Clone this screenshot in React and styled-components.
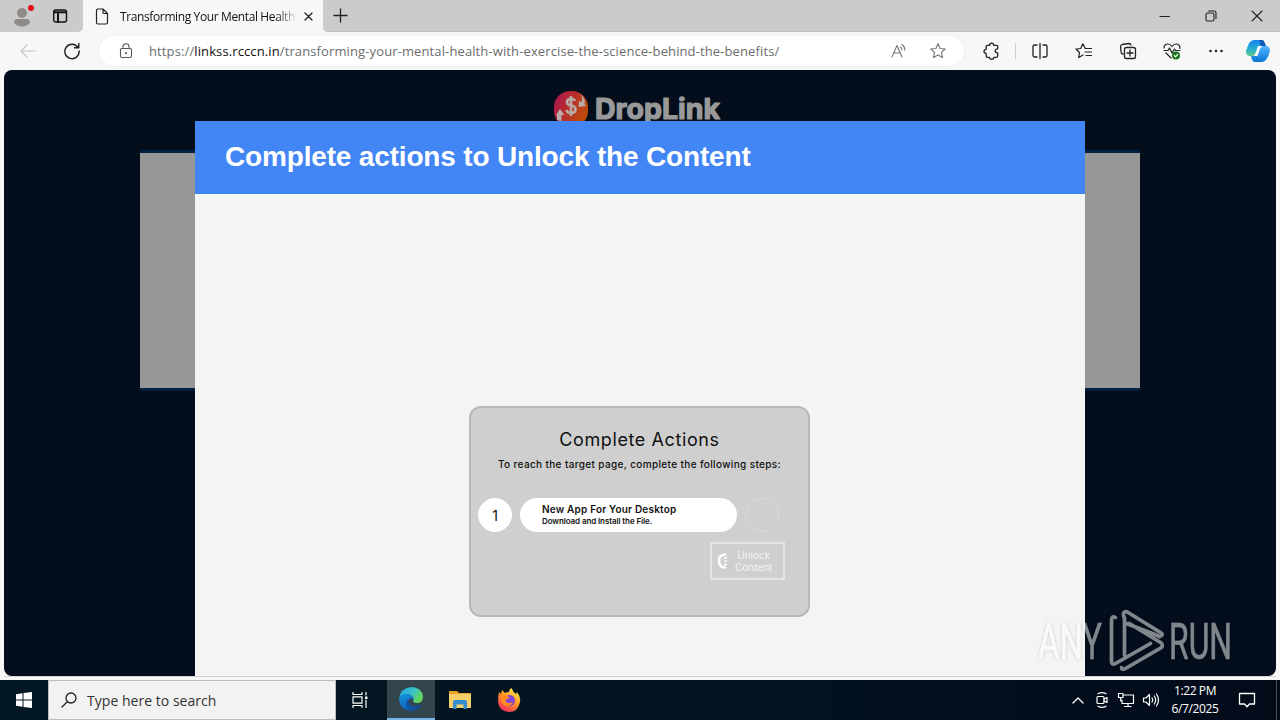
import React from "react";
import styled, { createGlobalStyle } from "styled-components";

const Global = createGlobalStyle`
  * { box-sizing: border-box; }
  html, body { margin: 0; padding: 0; overflow: hidden; }
  body { font-family: "Open Sans", "Noto Sans", sans-serif; }
  svg { display: block; flex: none; }
`;

const Screen = styled.div`
  position: relative;
  width: 1280px;
  height: 720px;
  display: flex;
  flex-direction: column;
  overflow: hidden;
  background: #f7f7f7;
`;

/* ---------- Browser chrome ---------- */
const TabStrip = styled.div`
  height: 32px;
  flex: none;
  display: flex;
  background: #f7f7f7;
`;
const StripStart = styled.div`
  width: 83px;
  display: flex;
  align-items: center;
  padding-left: 11px;
  gap: 18px;
  background: #cbcbcb;
  border-bottom-right-radius: 5px;
`;
const Tab = styled.div`
  width: 240px;
  display: flex;
  align-items: center;
  padding: 0 11px 0 12px;
  background: #f7f7f7;
`;
const TabTitle = styled.div`
  width: 175px;
  margin: 0 9px 0 11px;
  white-space: nowrap;
  font-size: 12px;
  letter-spacing: ${(p) => p.$spacing};
  color: #111;
  mask-image: linear-gradient(90deg, #000 156px, transparent 178px);
`;
const StripEnd = styled.div`
  flex: 1;
  display: flex;
  align-items: center;
  justify-content: space-between;
  padding: 0 17px 0 10px;
  background: #cbcbcb;
  border-bottom-left-radius: 5px;
  border-bottom: 1px solid #bdbdbd;
`;
const WindowControls = styled.div`
  display: flex;
  gap: 34px;
`;
const Toolbar = styled.div`
  height: 38px;
  flex: none;
  display: flex;
  align-items: center;
  padding: 0 9px 0 19px;
`;
const NavButtons = styled.div`
  width: 80px;
  display: flex;
  gap: 26px;
`;
const AddressBar = styled.div`
  width: 865px;
  height: 30px;
  border-radius: 15px;
  background: #fff;
  box-shadow: 0 0 2px #e6e6e6;
  display: flex;
  align-items: center;
  padding: 0 17px 0 18px;
`;
const Url = styled.div`
  flex: 1;
  margin-left: 14px;
  font-size: 13px;
  white-space: nowrap;
  letter-spacing: ${(p) => p.$spacing};
  color: #6d6d6d;
  b { font-weight: 400; color: #111; }
`;
const UrlActions = styled.div`
  display: flex;
  gap: 21px;
`;
const ToolIcons = styled.div`
  flex: 1;
  display: flex;
  align-items: center;
  gap: 26px;
  padding-left: 17px;
`;
const Divider = styled.div`
  width: 1px;
  height: 16px;
  margin: 0 -11px 0 -12px;
  background: #d0d0d0;
`;
const CopilotLogo = styled.svg`
  margin-left: -6px;
`;

/* ---------- Web page ---------- */
const Page = styled.main`
  position: relative;
  height: 606px;
  flex: none;
  margin: 0 4px;
  border-radius: 8px;
  background: #030d1b;
  overflow: hidden;
  display: flex;
  flex-direction: column;
  align-items: center;
  padding-top: 19px;
`;
const PageEdge = styled.div`
  height: 4px;
  flex: none;
  margin: 0 4px;
  border-top: 1px solid #d2d2d2;
`;
const SiteLogo = styled.svg`
  margin-right: 4px;
`;
const AdBlock = styled.div`
  width: 1000px;
  height: 241px;
  margin-top: 21px;
  background: #979797;
  border-top: 3px solid #02203f;
  border-bottom: 3px solid #02203f;
`;
const Modal = styled.section`
  position: absolute;
  left: 191px;
  top: 51px;
  width: 890px;
  height: 555px;
  background: #f4f4f4;
  display: flex;
  flex-direction: column;
  align-items: center;
`;
const ModalHeader = styled.h1`
  align-self: stretch;
  height: 73px;
  margin: 0 0 212px;
  padding: 0 30px 2px;
  display: flex;
  align-items: center;
  background: #4285f4;
  color: #fff;
  font: bold 28px "Liberation Sans", Arial, sans-serif;
  letter-spacing: ${(p) => p.$spacing};
`;
const Locker = styled.div`
  width: 341px;
  height: 211px;
  margin-right: 1px;
  border: 2px solid #b8b8b8;
  border-radius: 12px;
  background: #cfcfcf;
  font-family: Inter, sans-serif;
  color: #111;
  display: flex;
  flex-direction: column;
`;
const LockerTitle = styled.h2`
  margin: 20px 0 0;
  text-align: center;
  font-size: 18px;
  font-weight: 400;
  line-height: 24px;
  letter-spacing: ${(p) => p.$spacing};
`;
const LockerHint = styled.p`
  margin: 5px 0 0;
  text-align: center;
  white-space: nowrap;
  font-size: 10px;
  font-weight: 500;
  line-height: 14px;
  letter-spacing: ${(p) => p.$spacing};
`;
const StepRow = styled.div`
  display: flex;
  gap: 8px;
  margin: 27px 0 0 7px;
`;
const StepNumber = styled.div`
  width: 34px;
  height: 34px;
  border-radius: 50%;
  display: flex;
  align-items: center;
  justify-content: center;
  background: ${(p) => (p.$empty ? "transparent" : "#fff")};
  border: 1px solid ${(p) => (p.$empty ? "#d9d9d9" : "#fff")};
  font-size: 14px;
`;
const StepCard = styled.div`
  width: 217px;
  height: 34px;
  border-radius: 17px;
  background: #fff;
  padding: 5px 0 0 22px;
  white-space: nowrap;
`;
const StepName = styled.div`
  font-size: 10px;
  font-weight: 600;
  line-height: 13px;
  letter-spacing: ${(p) => p.$spacing};
`;
const StepText = styled.div`
  font-size: 8px;
  font-weight: 600;
  line-height: 11px;
  letter-spacing: ${(p) => p.$spacing};
`;
const UnlockButton = styled.div`
  align-self: flex-end;
  width: 75px;
  height: 38px;
  margin: 10px 23px 0 0;
  border: 2px solid #e4e4e4;
  display: flex;
  align-items: center;
  padding-left: 4px;
  gap: 6px;
  color: #f4f4f4;
  font-size: 10px;
  line-height: 12px;
  text-align: center;
`;

/* ---------- Taskbar ---------- */
const Taskbar = styled.footer`
  height: 40px;
  flex: none;
  display: flex;
  background: linear-gradient(90deg, #021721 0%, #02141f 55%, #030d1c 85%, #030b19 100%);
  color: #fff;
`;
const TaskButton = styled.div`
  width: ${(p) => p.$width || 49}px;
  display: flex;
  align-items: center;
  justify-content: center;
  padding-right: ${(p) => p.$shift || 0}px;
  background: ${(p) => (p.$active ? "#33464e" : "transparent")};
  border-bottom: ${(p) => (p.$active ? "2px solid #76b5e8" : "0")};
`;
const SearchBox = styled.div`
  width: 288px;
  display: flex;
  align-items: center;
  gap: 10px;
  padding-left: 12px;
  background: #f2f2f2;
  border: 1px solid #bcbcbc;
  color: #333;
  font-size: 14px;
  letter-spacing: ${(p) => p.$spacing};
`;
const Tray = styled.div`
  margin-left: auto;
  display: flex;
  align-items: center;
  gap: 7px;
  padding-right: 3px;
`;
const Clock = styled.div`
  width: 52px;
  margin: 0 10px 0 2px;
  text-align: center;
  font-size: 12px;
  line-height: 18px;
  white-space: nowrap;
  letter-spacing: ${(p) => p.$spacing};
`;
const Chevron = styled.div`
  margin-right: 2px;
`;
const DesktopEdge = styled.div`
  width: 1px;
  height: 40px;
  margin-left: 13px;
  background: #46505a;
`;
const Watermark = styled.svg`
  position: absolute;
  left: 1034px;
  top: 606px;
`;

function Icon({ w = 18, h = w, box, color = "#222", sw = 1.1, children }) {
  return (
    <svg width={w} height={h} viewBox={box || `0 0 ${w} ${h}`} fill="none" stroke={color} strokeWidth={sw} strokeLinecap="round" strokeLinejoin="round">
      {children}
    </svg>
  );
}

const STAR = "M9 1.8 11.1 6.5 16.2 7 12.4 10.4 13.5 15.5 9 12.9 4.5 15.5 5.6 10.4 1.8 7 6.9 6.5Z";

function Browser() {
  return (
    <>
      <TabStrip>
        <StripStart>
          <Icon w={23} h={26}>
            <g stroke="none">
              <circle cx="11" cy="10" r="5" fill="#8d8a88" />
              <path d="M3 19.5Q3 16 6.5 16H15.500Q19 16 19 19.500Q16 23.500 11 23.500T3 19.500Z" fill="#8d8a88" />
              <circle cx="20" cy="5" r="3" fill="#e00b1c" />
            </g>
          </Icon>
          <Icon w={16} sw={1.4} color="#111">
            <rect x="1.700" y="2" width="12.800" height="12" rx="2" />
            <path d="M2 4.300H14M6 5V14" strokeWidth="2" />
          </Icon>
        </StripStart>
        <Tab>
          <Icon w={14} h={17} sw={1.2}>
            <path d="M2.500 1H8L12.500 5.500V14.500Q12.500 16 11 16H3Q1.500 16 1.500 14.500V2.500Q1.500 1 3 1M8 1V4.500Q8 5.500 9 5.500H12.500" />
          </Icon>
          <TabTitle $spacing="-0.38px">Transforming Your Mental Health</TabTitle>
          <Icon w={9} sw={1.3}><path d="M1 1 8 8M8 1 1 8" /></Icon>
        </Tab>
        <StripEnd>
          <Icon w={15} sw={1.3}><path d="M7.500 1V14M1 7.500H14" /></Icon>
          <WindowControls>
            <Icon w={12} sw={1.1}><path d="M1 6.500H10.500" /></Icon>
            <Icon w={12} sw={1.1}>
              <rect x="1" y="3" width="8" height="8" rx="1.500" />
              <path d="M3.500 1H9Q11 1 11 3V8.500" />
            </Icon>
            <Icon w={12} sw={1.1}><path d="M1 1 11 11M11 1 1 11" /></Icon>
          </WindowControls>
        </StripEnd>
      </TabStrip>
      <Toolbar>
        <NavButtons>
          <Icon w={18} color="#c6c6c6"><path d="M16.500 9H2M8 3 2 9 8 15" /></Icon>
          <Icon w={18} sw={1.4}><path d="M15 5.500A7.200 7.200 0 1 0 16.200 9M15.800 1.500V5.800H11.500" /></Icon>
        </NavButtons>
        <AddressBar>
          <Icon w={18} color="#555">
            <rect x="3.500" y="6.500" width="11" height="9" rx="1.500" />
            <path d="M6 6.500V4.500Q6 1.700 9 1.700T12 4.500V6.500" />
            <circle cx="9" cy="11" r=".5" fill="#555" />
          </Icon>
          <Url $spacing="0.115px">
            https://<b>linkss.rcccn.in</b>/transforming-your-mental-health-with-exercise-the-science-behind-the-benefits/
          </Url>
          <UrlActions>
            <Icon w={18} color="#777"><path d="M2 15 7 3.500 12 15M3.700 11H10.300M10.500 5Q12 6 12 8M12 2.500Q15 4.500 14.700 8" /></Icon>
            <Icon w={18} color="#777"><path d={STAR} /></Icon>
          </UrlActions>
        </AddressBar>
        <ToolIcons>
          <Icon w={20} sw={1.3}>
            <path d="M5 4H7.500Q7.500 1.800 9.500 1.800T11.500 4H14.500Q15.500 4 15.500 5V7.500Q13 7.500 13 9.500T15.500 11.500V14.500Q15.500 16 14.500 16H11.800Q11.500 18 9.500 18T7.300 16H5Q4 16 4 15V12Q1.800 12 1.800 10T4 8V5Q4 4 5 4Z" transform="translate(1.2 .3)" />
          </Icon>
          <Divider />
          <Icon w={18} sw={1.3}><path d="M6 3H3.500Q2 3 2 4.500V13.500Q2 15 3.500 15H6M12 3H14.500Q16 3 16 4.500V13.500Q16 15 14.500 15H12M9 1.500V16.500" /></Icon>
          <Icon w={18} sw={1.2}><path d="M10 6 7.800 1.800 5.700 6.500 1 7.200 4.500 10.500 3.700 15.500 8 13M10 6.500H16.500M10 10H16.500M11 13.500H16.500" /></Icon>
          <Icon w={18} sw={1.3}>
            <path d="M4 12Q2 11.500 2 9.500L1.500 4.500Q1.500 3 3 2.500L10 1.500Q11.500 1.500 12 3" />
            <rect x="5.500" y="5.500" width="11" height="11" rx="2" />
            <path d="M11 8V14M8 11H14" />
          </Icon>
          <Icon w={18} sw={1.2}>
            <path d="M1 6Q1 2 5 2Q7 2 9 4.500Q11 2 13 2Q17 2 17 6.500M3 11 8 16M1 8.500H5L6.500 6 9 11 11.500 7 12.500 8.500H17" />
            <circle cx="13" cy="13.500" r="4" fill="#16751b" stroke="none" />
            <path d="M11.300 13.500 12.500 14.800 14.800 12.300" stroke="#fff" />
          </Icon>
          <Icon w={18} color="none"><g fill="#222"><circle cx="3.500" cy="9" r="1.300" /><circle cx="9" cy="9" r="1.300" /><circle cx="14.500" cy="9" r="1.300" /></g></Icon>
          <CopilotLogo width="26" height="24" viewBox="0 0 26 24">
            <defs>
              <linearGradient id="cpA" x1="0" y1="0" x2="0" y2="1"><stop offset="0" stopColor="#1482ed" /><stop offset=".6" stopColor="#28b3d0" /><stop offset="1" stopColor="#61cb7c" /></linearGradient>
              <linearGradient id="cpB" x1="0" y1="0" x2="0" y2="1"><stop offset="0" stopColor="#54b7ff" /><stop offset="1" stopColor="#0876d3" /></linearGradient>
            </defs>
            <path d="M9 1H17Q19 1 20 5L21 7H17Q14 7 13 11L11 17H5Q1 17 1 12Q4 1 9 1Z" fill="url(#cpA)" />
            <path d="M17 7H21Q25 7 25 12Q22 23 17 23H10Q7 23 6 17H9Q12 17 13 13L14 9Q15 7 17 7Z" fill="url(#cpB)" />
            <path d="M14 1H17Q19 1 20 5L21 7H16Z" fill="#1259b5" />
            <path d="M13.500 7H17.500Q15.500 8 14.500 11L13 16Q12.700 17 11.500 17H8Q10 16 11 13L12.300 8.500Q12.700 7 13.500 7Z" fill="#f4faff" />
          </CopilotLogo>
        </ToolIcons>
      </Toolbar>
    </>
  );
}

function DropLinkLogo() {
  return (
    <SiteLogo width="176" height="40" viewBox="0 0 176 40">
      <defs>
        <linearGradient id="coin" x1="0" y1="0" x2="1" y2=".5"><stop offset="0" stopColor="#a91356" /><stop offset=".5" stopColor="#b52d2d" /><stop offset="1" stopColor="#bf4a08" /></linearGradient>
      </defs>
      <rect x="4" y="2" width="34" height="36" rx="16" fill="url(#coin)" />
      <path d="M25 12Q24.500 10 21 10Q17 10 17 13Q17 16 21 16.500Q25.500 17 25.500 20.500T21 24Q17 24 16.500 21M21 7V27" fill="none" stroke="#b9aca8" strokeWidth="2.600" />
      <path d="M7 31V26L5.500 27 10 20 14.500 26H11.500V32ZM31 5Q36 11 34.500 15L36 17 28.500 18 29 11.500 31 13.500Q33 10 31 5Z" fill="#b9aca8" />
      <text x="45" y="30" textLength="125" lengthAdjust="spacingAndGlyphs" fontFamily="Inter, sans-serif" fontSize="28" fontWeight="700" fill="#999" stroke="#999" strokeWidth="1.200" strokeLinejoin="round">DropLink</text>
    </SiteLogo>
  );
}

function WebPage() {
  return (
    <Page>
      <DropLinkLogo />
      <AdBlock />
      <Modal>
        <ModalHeader $spacing="-0.17px">Complete actions to Unlock the Content</ModalHeader>
        <Locker>
          <LockerTitle $spacing="0.6px">Complete Actions</LockerTitle>
          <LockerHint $spacing="0.36px">To reach the target page, complete the following steps:</LockerHint>
          <StepRow>
            <StepNumber>1</StepNumber>
            <StepCard>
              <StepName $spacing="0.2px">New App For Your Desktop</StepName>
              <StepText $spacing="-0.1px">Download and Install the File.</StepText>
            </StepCard>
            <StepNumber $empty />
          </StepRow>
          <UnlockButton>
            <Icon w={13} h={18} color="#fff" sw={2.6}>
              <path d="M9 2.500Q3 3 3 9T9 15.500" />
              <path d="M8.500 6H10.500M8.500 9H10.500M8.500 12.500H10.500" strokeWidth="1.300" />
            </Icon>
            <span>Unlock<br />Content</span>
          </UnlockButton>
        </Locker>
      </Modal>
    </Page>
  );
}

function WindowsTaskbar() {
  return (
    <Taskbar>
      <TaskButton $width={48}>
        <svg width="16" height="16" viewBox="0 0 16 16" fill="#fff"><path d="M0 2.200 6.500 1.300V7.500H0ZM7.500 1.100 16 0V7.500H7.500ZM0 8.500H6.500V14.700L0 13.800ZM7.500 8.500H16V16L7.500 14.900Z" /></svg>
      </TaskButton>
      <SearchBox $spacing="0.03px">
        <Icon w={16} sw={1.3}><circle cx="10" cy="6" r="5" /><path d="M6.300 9.700 1 15" /></Icon>
        <span>Type here to search</span>
      </SearchBox>
      <TaskButton $width={51} $shift={4}>
        <Icon w={18} h={16} color="#fff" sw={1.2}><path d="M2 .5V2.500H11V.5M2 15.500V13.500H11V15.500M2 4.800H11V11.200H2ZM15 .5V3M15 8V15.500" /><rect x="14" y="4.500" width="2.500" height="2.500" fill="#fff" stroke="none" /></Icon>
      </TaskButton>
      <TaskButton $width={48} $active>
        <svg width="24" height="24" viewBox="0 0 24 24">
          <defs>
            <linearGradient id="edTop" x1="0" y1="0" x2="1" y2=".4"><stop offset="0" stopColor="#249bd8" /><stop offset=".6" stopColor="#38c3cb" /><stop offset="1" stopColor="#65d85b" /></linearGradient>
            <linearGradient id="edLow" x1="0" y1="0" x2=".5" y2="1"><stop offset="0" stopColor="#159be5" /><stop offset="1" stopColor="#0b59b1" /></linearGradient>
          </defs>
          <path d="M0 12Q1 1 12 0Q23 0 24 10Q23.500 16 18 16Q13 16 14.500 13Q15 8 8 7Q2 7 0 12Z" fill="url(#edTop)" />
          <path d="M0 12Q2 6 8 7Q14 8 14.500 12Q10 10 9 15Q9 22 17 22Q15 24 12 24Q1 23 0 12Z" fill="url(#edLow)" />
          <path d="M11 11.500Q8 14 11 17.500Q15 21 21.500 17.500L22 18.500Q18 24 13 23Q6 20 7.500 15Q8.500 12 11 11.500Z" fill="#134f9a" />
        </svg>
      </TaskButton>
      <TaskButton>
        <svg width="22" height="20" viewBox="0 0 22 20">
          <path d="M0 1H8L10 3H21Q22 3 22 4V17H0Z" fill="#e8a526" />
          <path d="M0 4H22V18H0Z" fill="#f5d06a" />
          <path d="M4 19V12Q4 10 6 10H16Q18 10 18 12V19H14.500V14.500H7.500V19Z" fill="#348ed0" />
        </svg>
      </TaskButton>
      <TaskButton>
        <svg width="24" height="24" viewBox="0 0 24 24">
          <defs><linearGradient id="fox" x1=".8" y1="0" x2=".2" y2="1"><stop offset="0" stopColor="#fff04a" /><stop offset=".45" stopColor="#ff9a24" /><stop offset="1" stopColor="#f22164" /></linearGradient></defs>
          <path d="M2 4 4 6 5 2 8 5Q10 4 12 4Q12 1 14.500 0Q16 4 19 6L20 4Q24 9 23 14Q21 24 12 24Q1 23 1 13Q1 8 2 4Z" fill="url(#fox)" />
          <circle cx="12.500" cy="12.500" r="5.500" fill="#8144d8" />
          <path d="M4 8Q8 6 12 9Q14 10 10 11Q8 12 9 14Q12 16 16 14Q13 20 7 17Q3 14 4 8Z" fill="#ff8a20" />
        </svg>
      </TaskButton>
      <Tray>
        <Chevron><Icon w={14} color="#fff" sw={1.3}><path d="M2 10 7 5 12 10" /></Icon></Chevron>
        <Icon w={16} h={18} color="#fff" sw={1.2}><rect x="3" y="5.500" width="7" height="7" rx="1" /><path d="M10 8 13 6.500V11.500L10 10M4 2.800Q8 .5 12 2.800M4 15.200Q8 17.500 12 15.200" /></Icon>
        <Icon w={18} h={16} color="#fff" sw={1.2}><path d="M7 3H16.500V11.500H5V8M11 11.500V14.500M7.500 14.500H14M1.500 1.500H6V5.500H1.500ZM3.700 5.500V9" /></Icon>
        <Icon w={18} h={16} color="#fff" sw={1.2}><path d="M1.500 6H4L7.500 2.500V13.500L4 10H1.500ZM10 6Q11.300 8 10 10M12.300 4Q15 8 12.300 12M14.500 2Q18.500 8 14.500 14" /></Icon>
        <Clock $spacing="-0.4px">1:22 PM<br />6/7/2025</Clock>
        <Icon w={18} h={18} color="#fff" sw={1.3}><path d="M1.500 2.500H16.500V13H11.500L9 15.800 6.500 13H1.500Z" /></Icon>
        <DesktopEdge />
      </Tray>
    </Taskbar>
  );
}

function AnyRun() {
  return (
    <Watermark width="220" height="74" viewBox="0 0 220 74">
      <defs>
        <filter id="soft" x="-10%" y="-10%" width="120%" height="120%"><feDropShadow dx="0" dy="0" stdDeviation="1.500" floodColor="#000" floodOpacity=".4" /></filter>
      </defs>
      <g opacity=".5" filter="url(#soft)" fontFamily="Roboto, sans-serif" fontSize="50" fill="#fff">
        <text x="4" y="53" textLength="64" lengthAdjust="spacingAndGlyphs" stroke="#fff" strokeWidth=".5">ANY</text>
        <text x="135" y="53" textLength="63" lengthAdjust="spacingAndGlyphs" stroke="#fff" strokeWidth=".5">RUN</text>
        <path d="M82 12Q78 10 78 15V56Q78 60 82 58L117 38M91 50V13Q88 6 93 6L127 27Q130 29 128 30Q126 32 124 30L93 18M88 62Q88 65 92 63L128 42Q130 39 127 37L96 18" transform="translate(-.5 -.5)" fill="none" stroke="#fff" strokeWidth="3.600" strokeLinejoin="round" strokeLinecap="round" />
      </g>
    </Watermark>
  );
}

export default function App() {
  return (
    <Screen>
      <Global />
      <Browser />
      <WebPage />
      <PageEdge />
      <WindowsTaskbar />
      <AnyRun />
    </Screen>
  );
}
